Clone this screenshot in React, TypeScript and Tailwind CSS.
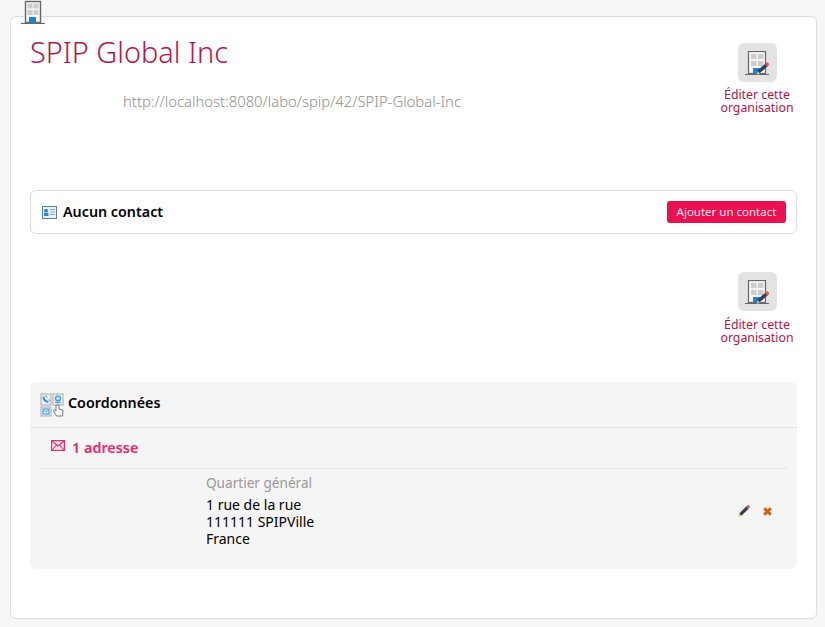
const font = '"Noto Sans", "Open Sans", sans-serif';

function Building({ size = 24 }: { size?: number }) {
  return (
    <svg width={size} height={size} viewBox="0 0 24 24" className="block">
      <rect x="4.500" y="1.500" width="15" height="21" fill="#f6f6f6" stroke="#666" strokeWidth="1.400" />
      <rect x="6.500" y="3.500" width="5" height="5" fill="#ccc" />
      <rect x="12.500" y="3.500" width="5" height="5" fill="#ccc" />
      <rect x="6.500" y="10" width="5" height="5" fill="#ccc" />
      <rect x="12.500" y="10" width="5" height="5" fill="#ccc" />
      <rect x="8" y="17" width="7" height="6" fill="#1f7fd6" />
      <rect x="0" y="23" width="24" height="1" fill="#666" />
    </svg>
  );
}

function EditIcon() {
  return (
    <div className="w-[39px] h-[39px] bg-[#e3e3e3] rounded-md flex items-center justify-center">
      <svg width="24" height="24" viewBox="0 0 24 24" className="block">
        <rect x="3.500" y="0.500" width="17" height="22" fill="#f6f6f6" stroke="#666" strokeWidth="1.200" />
        <rect x="6" y="3" width="5.500" height="5" fill="#ccc" />
        <rect x="13" y="3" width="5.500" height="5" fill="#ccc" />
        <rect x="6" y="10" width="5.500" height="5" fill="#ccc" />
        <rect x="13" y="10" width="5.500" height="5" fill="#ccc" />
        <rect x="8" y="17" width="7" height="6" fill="#1f7fd6" />
        <rect x="0" y="23" width="24" height="1" fill="#666" />
        <path d="M13.500 21 L21.500 14" stroke="#2f4156" strokeWidth="3.600" />
        <path d="M21 14.500 L23.500 12.300" stroke="#e5533d" strokeWidth="3.400" />
        <path d="M11.800 24 L12.500 20.500 L15 22.600 Z" fill="#e8c46a" />
      </svg>
    </div>
  );
}

function ActionLabel() {
  return (
    <div className="text-center text-[12.300px] leading-[13px] text-[#b8134a]">
      Éditer cette
      <br />
      organisation
    </div>
  );
}

function ContactCard() {
  return (
    <svg width="15" height="13" viewBox="0 0 15 13" className="block">
      <rect x="0.500" y="0.500" width="14" height="12" fill="#eaf1f8" stroke="#5d7f9e" />
      <rect x="2" y="3" width="4" height="3.500" rx="1.500" fill="#2a86d8" />
      <rect x="2" y="7" width="4.500" height="3" fill="#2a86d8" />
      <path d="M8 3.500h5M8 6h5M8 8.500h5" stroke="#8aa4bc" strokeWidth="1" />
    </svg>
  );
}

function CoordIcon() {
  return (
    <svg width="24" height="24" viewBox="0 0 24 24" className="block">
      <rect x="1" y="1" width="10" height="11" fill="#eef3f8" stroke="#a9a9a9" />
      <rect x="13" y="1" width="10" height="11" fill="#eef3f8" stroke="#a9a9a9" />
      <rect x="1" y="14" width="10" height="9" fill="#eef3f8" stroke="#a9a9a9" />
      <path d="M3.500 3.500c0 3 2 5 5 5.500" stroke="#2f8fdc" strokeWidth="2" fill="none" />
      <path d="M5.500 2.500 7 4.500M9 6.500 10 8" stroke="#2f8fdc" strokeWidth="1" />
      <circle cx="18" cy="5.500" r="2.500" fill="#bfe0f8" stroke="#4ba3e6" strokeWidth="1.400" />
      <path d="M15 9.500h6" stroke="#4ba3e6" strokeWidth="1.200" />
      <rect x="3" y="16" width="6" height="5" fill="#d6ebfb" stroke="#4ba3e6" strokeWidth="1.200" />
      <path d="M3 16l3 3 3-3" fill="none" stroke="#4ba3e6" strokeWidth="0.800" />
      <path d="M16 12v6l-1.500-1.500-1 1 3 5.500h6l0.500-6-4-1v-4z" fill="#fff" stroke="#666" strokeWidth="0.900" />
    </svg>
  );
}

function Mail() {
  return (
    <svg width="14" height="11" viewBox="0 0 14 11" className="block">
      <rect x="0.600" y="0.600" width="12.800" height="9.800" fill="#fde7ee" stroke="#f02a68" strokeWidth="1.200" />
      <path d="M1 1l6 5 6-5M1 10l4.500-5M13 10l-4.500-5" stroke="#f02a68" strokeWidth="1.100" fill="none" />
    </svg>
  );
}

function Pencil() {
  return (
    <svg width="12" height="12" viewBox="0 0 12 12" className="block">
      <path d="M2.300 9.700 L9.500 2.500" stroke="#2f4156" strokeWidth="3.200" />
      <path d="M9 3 L11.300 0.700" stroke="#e5533d" strokeWidth="3" />
      <path d="M0.300 11.700 L1 8.600 L3.400 11 Z" fill="#e8c46a" />
    </svg>
  );
}

function Cross() {
  return (
    <svg width="9" height="9" viewBox="0 0 9 9" className="block">
      <path d="M1.200 1.200 L7.800 7.800 M7.800 1.200 L1.200 7.800" stroke="#dd5a06" strokeWidth="2.800" />
    </svg>
  );
}

export default function App() {
  return (
    <div className="w-[825px] h-[627px] bg-[#f7f7f7] pt-[16px] px-[10px] overflow-hidden" style={{ fontFamily: font }}>
      <div className="relative w-[807px] h-[603px] bg-white border border-[#dddddd] rounded-md px-[19px]">
        <div className="absolute left-[10px] top-[-17px]">
          <Building />
        </div>

        <div className="flex h-[173px] justify-between">
          <div className="pt-[16px]">
            <h1 className="text-[28.900px] leading-[40px] mt-[-1px] text-[#b5174b] font-light">SPIP Global Inc</h1>
            <div className="mt-[19px] ml-[93px] text-[14.850px] leading-[20px] font-light text-[#8f8f8f]">
              http://localhost:8080/labo/spip/42/SPIP-Global-Inc
            </div>
          </div>
          <div className="flex flex-col items-center w-[80px] pt-[26px]">
            <EditIcon />
            <div className="mt-[6px]">
              <ActionLabel />
            </div>
          </div>
        </div>

        <div className="h-[44px] w-[767px] border border-[#dddddd] rounded-md flex items-center justify-between pl-[11px] pr-[10px]">
          <div className="flex items-center gap-[6px]">
            <ContactCard />
            <span className="text-[14.300px] leading-[18px] font-semibold text-black">Aucun contact</span>
          </div>
          <div className="w-[119px] h-[22px] bg-[#e9114f] rounded-[3px] flex items-center justify-center text-[11.500px] text-[#fde4ec]">
            Ajouter un contact
          </div>
        </div>

        <div className="flex justify-end mt-[38px]">
          <div className="flex flex-col items-center w-[80px]">
            <EditIcon />
            <div className="mt-[7px]">
              <ActionLabel />
            </div>
          </div>
        </div>

        <div className="mt-[38px] w-[767px] h-[187px] bg-[#f5f5f5] rounded-md">
          <div className="h-[46px] border-b border-[#e2e2e2] flex items-center pl-[10px] gap-[4px]">
            <CoordIcon />
            <span className="text-[14.300px] leading-[18px] mt-[-4px] font-semibold text-black">Coordonnées</span>
          </div>
          <div className="mx-[10px] h-[41px] border-b border-[#e4e4e4] flex items-center pl-[11px] gap-[7px]">
            <div className="mt-[-5px]">
              <Mail />
            </div>
            <span className="text-[14.400px] font-semibold text-[#f0246a]">1 adresse</span>
          </div>
          <div className="flex pl-[176px] pr-[25px] pt-[5px] justify-between">
            <div className="text-[14px] leading-[17px]">
              <div className="text-[#999999] mb-[5px] text-[13.600px]">Quartier général</div>
              <div className="text-black">1 rue de la rue</div>
              <div className="text-black">111111 SPIPVille</div>
              <div className="text-black">France</div>
            </div>
            <div className="flex items-center gap-[13px] h-[28px] mt-[23px]">
              <Pencil />
              <Cross />
            </div>
          </div>
        </div>
      </div>
    </div>
  );
}
